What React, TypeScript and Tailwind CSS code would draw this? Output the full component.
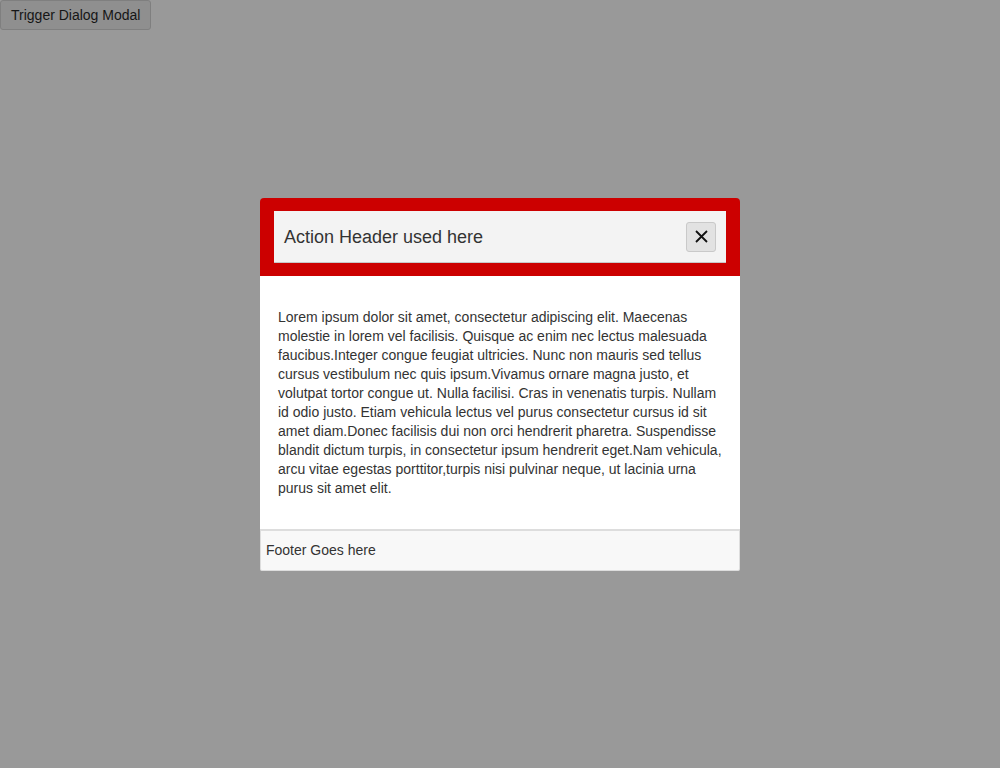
export default function App() {
  return (
    <div className="relative min-h-[768px] w-full bg-[#999999] font-['Liberation_Sans',Arial,sans-serif]">
      <button className="h-[30px] rounded-[3px] border border-[#7f7f7f] bg-[#8f8f8f] px-[10px] text-[14px] text-[#161616]">
        Trigger Dialog Modal
      </button>

      <div className="absolute left-[260px] top-[198px] w-[480px]">
        <div className="rounded-t-[4px] bg-[#cc0000] px-[14px] pb-[13px] pt-[13px]">
          <div className="flex h-[52px] items-center justify-between border-b border-[#c8c8c8] bg-[#f3f3f3] pl-[10px] pr-[10px]">
            <span className="pt-[2px] text-[18px] text-[#333333]">Action Header used here</span>
            <button className="flex h-[30px] w-[30px] items-center justify-center rounded-[3px] border border-[#c9c9c9] bg-[#e2e2e2]">
              <svg width="13" height="13" viewBox="0 0 13 13">
                <path d="M1 1 L12 12 M12 1 L1 12" stroke="#111111" strokeWidth="1.8" />
              </svg>
            </button>
          </div>
        </div>
        <div className="bg-white p-[18px]">
          <p className="my-[14px] text-[14px] leading-[19px] text-[#333333]">
            Lorem ipsum dolor sit amet, consectetur adipiscing elit. Maecenas molestie in lorem vel facilisis. Quisque ac enim nec lectus malesuada faucibus.Integer congue feugiat ultricies. Nunc non mauris sed tellus cursus vestibulum nec quis ipsum.Vivamus ornare magna justo, et volutpat tortor congue ut. Nulla facilisi. Cras in venenatis turpis. Nullam id odio justo. Etiam vehicula lectus vel purus consectetur cursus id sit amet diam.Donec facilisis dui non orci hendrerit pharetra. Suspendisse blandit dictum turpis, in consectetur ipsum hendrerit eget.Nam vehicula, arcu vitae egestas porttitor,turpis nisi pulvinar neque, ut lacinia urna purus sit amet elit.
          </p>
        </div>
        <div className="-mt-px flex h-[42px] items-center rounded-b-[2px] border border-t-2 border-[#dddddd] bg-[#f8f8f8] px-[5px] text-[14px] text-[#333333]">
          Footer Goes here
        </div>
      </div>
    </div>
  );
}
